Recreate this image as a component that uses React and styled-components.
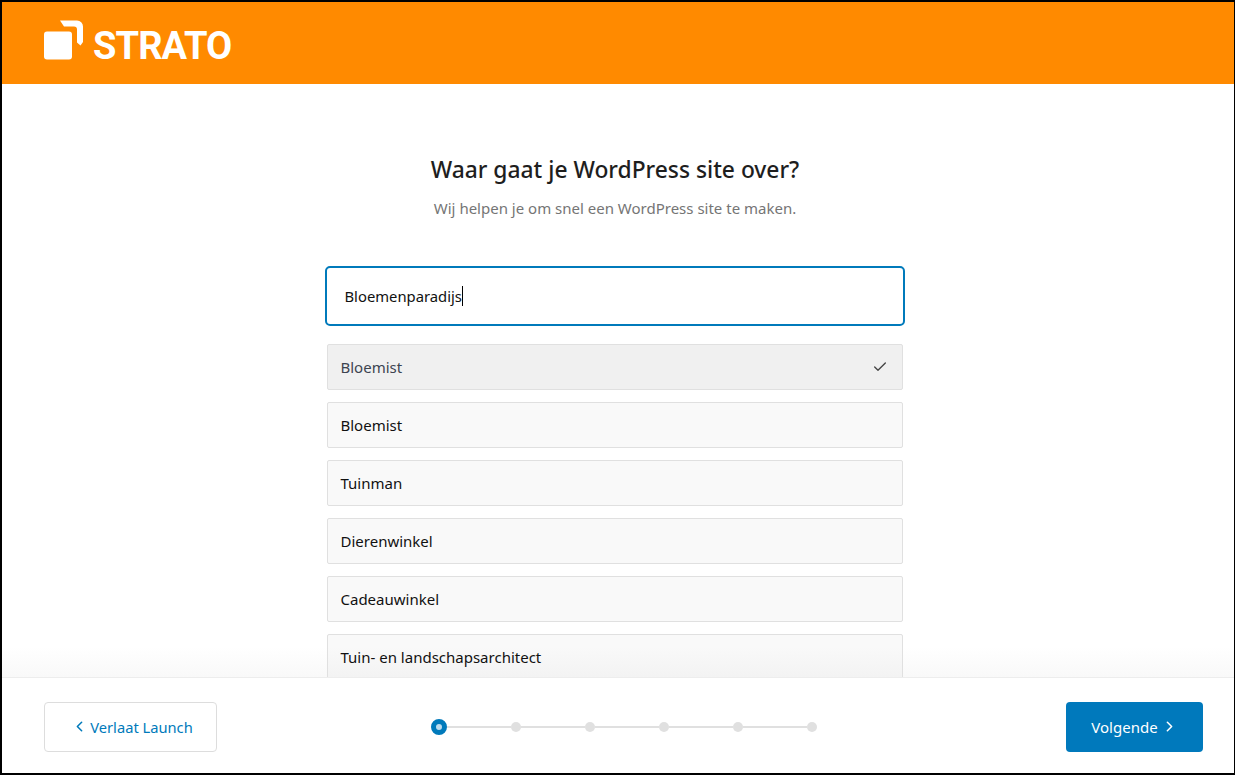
import styled, { createGlobalStyle } from 'styled-components';
import { Check, ChevronLeft, ChevronRight } from 'lucide-react';

const Global = createGlobalStyle`
  html, body { margin: 0; height: 100%; background: #fff; }
  * { box-sizing: border-box; }
  #root { height: 100%; }
`;

const Frame = styled.div`
  width: 1235px;
  height: 775px;
  display: flex;
  flex-direction: column;
  overflow: hidden;
  border: solid #000;
  border-width: 2px 1px 2px 2px;
  font-family: 'Noto Sans', 'Open Sans', sans-serif;
  color: #111;
`;

const Header = styled.header`
  height: 82px;
  flex: none;
  background: #ff8a00;
  display: flex;
  align-items: center;
  padding: 0 0 1px 42px;
`;

const Logo = styled.div`
  display: flex;
  align-items: flex-start;
  gap: 5px;
  color: #fff;
`;

const Wordmark = styled.span`
  font-family: 'Roboto', sans-serif;
  font-weight: 700;
  font-size: 38px;
  line-height: 1;
  letter-spacing: -0.9px;
  margin-top: 7px;
`;

const Main = styled.main`
  flex: 1;
  min-height: 0;
  overflow: hidden;
  display: flex;
  flex-direction: column;
  align-items: center;
  position: relative;
  padding: 71px 7px 0 0;
`;

const Title = styled.h1`
  margin: 0 0 0 1px;
  font-size: 22.8px;
  font-weight: 500;
  line-height: 30px;
  color: #1e1e1e;
`;

const Subtitle = styled.p`
  margin: 11px 0 0 1px;
  font-size: 15px;
  line-height: 24px;
  color: #757575;
`;

const Field = styled.div`
  width: 580px;
  height: 60px;
  margin-top: 46px;
  flex: none;
  border: 2px solid #007abb;
  border-radius: 5px;
  display: flex;
  align-items: center;
  padding-left: 18px;
  font-size: 14.8px;
  background: #fff;
`;

const Caret = styled.span`
  width: 1px;
  height: 20px;
  background: #000;
`;

const Options = styled.div`
  width: 576px;
  margin-top: 18px;
  display: flex;
  flex-direction: column;
  gap: 12px;
  flex: none;
  position: relative;
  z-index: 1;
`;

const Option = styled.div`
  height: 46px;
  flex: none;
  display: flex;
  align-items: center;
  justify-content: space-between;
  padding: 0 14px 0 13px;
  border: 1px solid #e0e0e0;
  border-radius: 2px;
  font-size: 15px;
  background: ${(p) => (p.$selected ? 'rgba(0, 0, 0, 0.06)' : 'rgba(0, 0, 0, 0.025)')};
  color: ${(p) => (p.$selected ? '#3d4450' : '#111')};
`;

const Fade = styled.div`
  position: absolute;
  left: 0;
  right: 0;
  bottom: 0;
  height: 30px;
  pointer-events: none;
  background: linear-gradient(rgba(245, 245, 245, 0), rgba(245, 245, 245, 0.6));
`;

const Footer = styled.footer`
  height: 96px;
  flex: none;
  border-top: 1px solid #ededed;
  display: flex;
  align-items: center;
  justify-content: space-between;
  padding: 2px 31px 0 42px;
  background: #fff;
`;

const BackButton = styled.button`
  width: 173px;
  height: 50px;
  border: 1px solid #ddd;
  border-radius: 4px;
  background: #fff;
  color: #007abb;
  font: inherit;
  font-size: 14.7px;
  display: flex;
  align-items: center;
  justify-content: center;
  gap: 2px;
  padding: 0 0 0 3px;
`;

const NextButton = styled(BackButton)`
  width: 137px;
  border: none;
  background: #0079bc;
  color: #fff;
  font-size: 15px;
  gap: 3px;
  padding: 0;
`;

const Steps = styled.div`
  display: flex;
  align-items: center;
  margin-left: -36px;
`;

const Dot = styled.span`
  width: 10px;
  height: 10px;
  border-radius: 50%;
  background: #e0e0e0;
  flex: none;
`;

const ActiveDot = styled.span`
  width: 16px;
  height: 16px;
  border-radius: 50%;
  border: 5px solid #007abb;
  background: #bcdcee;
  flex: none;
`;

const Line = styled.span`
  width: 64px;
  height: 2px;
  background: #e0e0e0;
  flex: none;
  &:first-of-type { width: 62px; }
`;

const StratoMark = () => (
  <svg width="44" height="40" viewBox="0 0 44 40" fill="none">
    <path d="M16 0.5h17a6 6 0 0 1 6 6v15.5l-2.5 3.5-3.5-3V9.5a3 3 0 0 0-3-3H20z" fill="#fff" />
    <rect x="0" y="11.5" width="28" height="28" rx="3" fill="#fff" />
  </svg>
);

const options = ['Bloemist', 'Tuinman', 'Dierenwinkel', 'Cadeauwinkel', 'Tuin- en landschapsarchitect'];

export default function App() {
  return (
    <Frame>
      <Global />
      <Header>
        <Logo>
          <StratoMark />
          <Wordmark>STRATO</Wordmark>
        </Logo>
      </Header>
      <Main>
        <Title>Waar gaat je WordPress site over?</Title>
        <Subtitle>Wij helpen je om snel een WordPress site te maken.</Subtitle>
        <Field>
          Bloemenparadijs
          <Caret />
        </Field>
        <Options>
          <Option $selected>
            Bloemist
            <Check size={16} strokeWidth={2} color="#444" />
          </Option>
          {options.map((o) => (
            <Option key={o}>{o}</Option>
          ))}
        </Options>
        <Fade />
      </Main>
      <Footer>
        <BackButton>
          <ChevronLeft size={17} strokeWidth={2.2} />
          Verlaat Launch
        </BackButton>
        <Steps>
          <ActiveDot />
          <Line />
          <Dot />
          <Line />
          <Dot />
          <Line />
          <Dot />
          <Line />
          <Dot />
          <Line />
          <Dot />
        </Steps>
        <NextButton>
          Volgende
          <ChevronRight size={17} strokeWidth={2.2} />
        </NextButton>
      </Footer>
    </Frame>
  );
}
